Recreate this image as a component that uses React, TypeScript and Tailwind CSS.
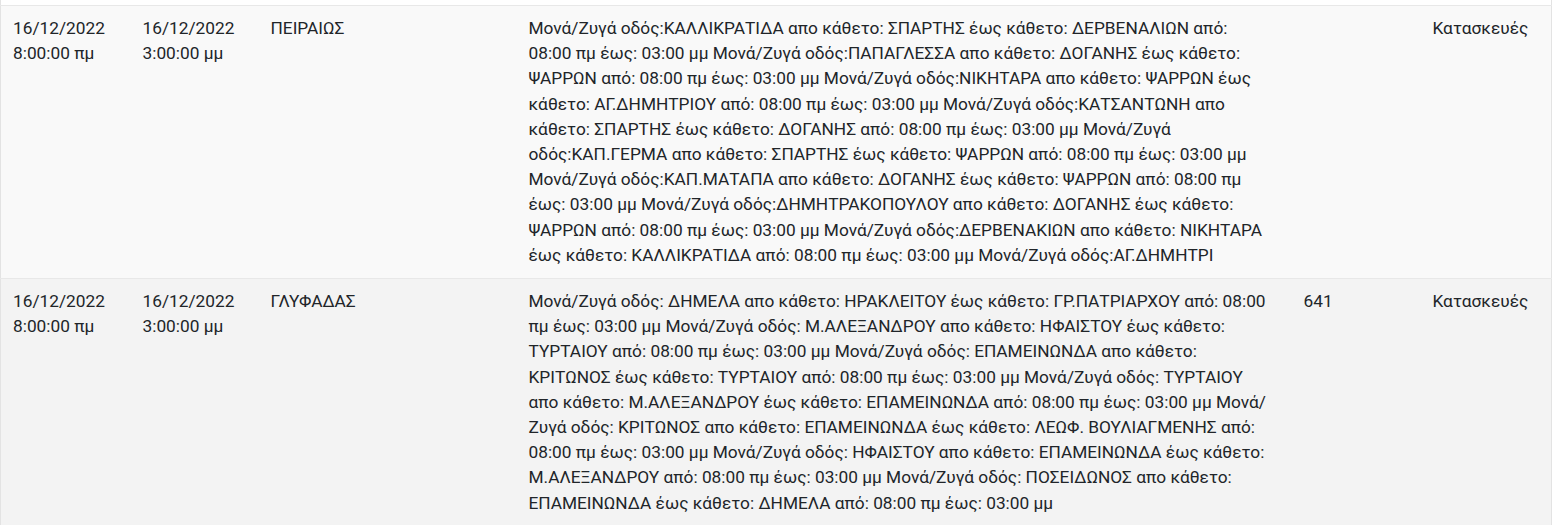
import React from 'react';

type Row = {
  from: string[];
  to: string[];
  area: string;
  lines: string[];
  code: string;
  reason: string;
};

// description lines kept as they wrap in the source table
const rows: Row[] = [
  {
    from: ['16/12/2022', '8:00:00 πμ'],
    to: ['16/12/2022', '3:00:00 μμ'],
    area: 'ΠΕΙΡΑΙΩΣ',
    lines: [
      'Μονά/Ζυγά οδός:ΚΑΛΛΙΚΡΑΤΙΔΑ απο κάθετο: ΣΠΑΡΤΗΣ έως κάθετο: ΔΕΡΒΕΝΑΛΙΩΝ από:',
      '08:00 πμ έως: 03:00 μμ Μονά/Ζυγά οδός:ΠΑΠΑΓΛΕΣΣΑ απο κάθετο: ΔΟΓΑΝΗΣ έως κάθετο:',
      'ΨΑΡΡΩΝ από: 08:00 πμ έως: 03:00 μμ Μονά/Ζυγά οδός:ΝΙΚΗΤΑΡΑ απο κάθετο: ΨΑΡΡΩΝ έως',
      'κάθετο: ΑΓ.ΔΗΜΗΤΡΙΟΥ από: 08:00 πμ έως: 03:00 μμ Μονά/Ζυγά οδός:ΚΑΤΣΑΝΤΩΝΗ απο',
      'κάθετο: ΣΠΑΡΤΗΣ έως κάθετο: ΔΟΓΑΝΗΣ από: 08:00 πμ έως: 03:00 μμ Μονά/Ζυγά',
      'οδός:ΚΑΠ.ΓΕΡΜΑ απο κάθετο: ΣΠΑΡΤΗΣ έως κάθετο: ΨΑΡΡΩΝ από: 08:00 πμ έως: 03:00 μμ',
      'Μονά/Ζυγά οδός:ΚΑΠ.ΜΑΤΑΠΑ απο κάθετο: ΔΟΓΑΝΗΣ έως κάθετο: ΨΑΡΡΩΝ από: 08:00 πμ',
      'έως: 03:00 μμ Μονά/Ζυγά οδός:ΔΗΜΗΤΡΑΚΟΠΟΥΛΟΥ απο κάθετο: ΔΟΓΑΝΗΣ έως κάθετο:',
      'ΨΑΡΡΩΝ από: 08:00 πμ έως: 03:00 μμ Μονά/Ζυγά οδός:ΔΕΡΒΕΝΑΚΙΩΝ απο κάθετο: ΝΙΚΗΤΑΡΑ',
      'έως κάθετο: ΚΑΛΛΙΚΡΑΤΙΔΑ από: 08:00 πμ έως: 03:00 μμ Μονά/Ζυγά οδός:ΑΓ.ΔΗΜΗΤΡΙ',
    ],
    code: '',
    reason: 'Κατασκευές',
  },
  {
    from: ['16/12/2022', '8:00:00 πμ'],
    to: ['16/12/2022', '3:00:00 μμ'],
    area: 'ΓΛΥΦΑΔΑΣ',
    lines: [
      'Μονά/Ζυγά οδός: ΔΗΜΕΛΑ απο κάθετο: ΗΡΑΚΛΕΙΤΟΥ έως κάθετο: ΓΡ.ΠΑΤΡΙΑΡΧΟΥ από: 08:00',
      'πμ έως: 03:00 μμ Μονά/Ζυγά οδός: Μ.ΑΛΕΞΑΝΔΡΟΥ απο κάθετο: ΗΦΑΙΣΤΟΥ έως κάθετο:',
      'ΤΥΡΤΑΙΟΥ από: 08:00 πμ έως: 03:00 μμ Μονά/Ζυγά οδός: ΕΠΑΜΕΙΝΩΝΔΑ απο κάθετο:',
      'ΚΡΙΤΩΝΟΣ έως κάθετο: ΤΥΡΤΑΙΟΥ από: 08:00 πμ έως: 03:00 μμ Μονά/Ζυγά οδός: ΤΥΡΤΑΙΟΥ',
      'απο κάθετο: Μ.ΑΛΕΞΑΝΔΡΟΥ έως κάθετο: ΕΠΑΜΕΙΝΩΝΔΑ από: 08:00 πμ έως: 03:00 μμ Μονά/',
      'Ζυγά οδός: ΚΡΙΤΩΝΟΣ απο κάθετο: ΕΠΑΜΕΙΝΩΝΔΑ έως κάθετο: ΛΕΩΦ. ΒΟΥΛΙΑΓΜΕΝΗΣ από:',
      '08:00 πμ έως: 03:00 μμ Μονά/Ζυγά οδός: ΗΦΑΙΣΤΟΥ απο κάθετο: ΕΠΑΜΕΙΝΩΝΔΑ έως κάθετο:',
      'Μ.ΑΛΕΞΑΝΔΡΟΥ από: 08:00 πμ έως: 03:00 μμ Μονά/Ζυγά οδός: ΠΟΣΕΙΔΩΝΟΣ απο κάθετο:',
      'ΕΠΑΜΕΙΝΩΝΔΑ έως κάθετο: ΔΗΜΕΛΑ από: 08:00 πμ έως: 03:00 μμ',
    ],
    code: '641',
    reason: 'Κατασκευές',
  },
];

const App = () => {
  return (
    <div className="w-[1552px] bg-white font-['Roboto',sans-serif] text-[17.3px] leading-[25.2px] text-[#212529]">
      <div className="h-[5px] border-x border-[#e3e3e3]" />
      <table className="w-full table-fixed border-collapse border border-[#e3e3e3]">
        <colgroup>
          <col className="w-[130px]" />
          <col className="w-[128px]" />
          <col className="w-[258px]" />
          <col className="w-[775px]" />
          <col className="w-[129px]" />
          <col />
        </colgroup>
        <tbody>
          {rows.map((row, i) => (
            <tr
              key={i}
              className={`border-t border-[#e8e8e8] align-top ${i % 2 === 0 ? 'bg-[#f9f9f9]' : 'bg-[#f3f3f3]'}`}
            >
              <td className="px-3 py-2.5">
                {row.from[0]}
                <br />
                {row.from[1]}
              </td>
              <td className="px-3 py-2.5">
                {row.to[0]}
                <br />
                {row.to[1]}
              </td>
              <td className="px-3 py-2.5">{row.area}</td>
              <td className="px-3 py-2.5">
                {row.lines.map((line, j) => (
                  <span key={j} className="block whitespace-nowrap">
                    {line}
                  </span>
                ))}
              </td>
              <td className="px-3 py-2.5">{row.code}</td>
              <td className="px-3 py-2.5">{row.reason}</td>
            </tr>
          ))}
        </tbody>
      </table>
    </div>
  );
};

export default App;
